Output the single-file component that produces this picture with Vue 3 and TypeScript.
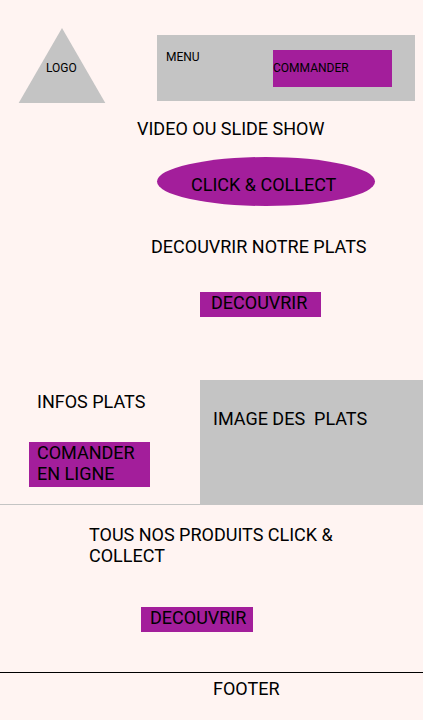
<script setup lang="ts">
interface Labels {
  logo: string
  menu: string
  order: string
  discover: string
}

const labels: Labels = {
  logo: 'LOGO',
  menu: 'MENU',
  order: 'COMMANDER',
  discover: 'DECOUVRIR',
}
</script>

<template>
  <div class="page">
    <header class="header">
      <div class="logo">
        <svg class="logo-shape" width="86" height="75" viewBox="0 0 86 75" aria-hidden="true">
          <path d="M43 0L86.3 75H-0.3Z" fill="#c4c4c4" />
        </svg>
        <span class="logo-text">{{ labels.logo }}</span>
      </div>
      <nav class="nav">
        <a class="menu">{{ labels.menu }}</a>
        <a class="order">{{ labels.order }}</a>
      </nav>
    </header>

    <main>
      <section class="hero">
        <h1 class="hero-title">VIDEO OU SLIDE SHOW</h1>
        <a class="oval">CLICK &amp; COLLECT</a>
      </section>

      <section class="dishes">
        <h2 class="dishes-title">DECOUVRIR NOTRE PLATS</h2>
        <a class="button dishes-button">{{ labels.discover }}</a>
      </section>

      <section class="details">
        <div class="info">
          <h2>INFOS PLATS</h2>
          <a class="button info-button">COMANDER<br />EN LIGNE</a>
        </div>
        <div class="image">IMAGE DES&nbsp; PLATS</div>
      </section>

      <section class="products">
        <h2 class="products-title">TOUS NOS PRODUITS CLICK &amp; COLLECT</h2>
        <a class="button products-button">{{ labels.discover }}</a>
      </section>
    </main>

    <footer class="footer">FOOTER</footer>
  </div>
</template>

<style>
body {
  margin: 0;
  background: #fff4f2;
}
</style>

<style scoped>
.page {
  box-sizing: border-box;
  width: 423px;
  height: 720px;
  overflow: hidden;
  background: #fff4f2;
  color: #000;
  font-family: Roboto, sans-serif;
  font-size: 18px;
  line-height: 21px;
}

h1,
h2 {
  margin: 0;
  font-size: inherit;
  font-weight: 400;
}

.header {
  display: flex;
  align-items: flex-start;
  justify-content: space-between;
  box-sizing: border-box;
  height: 118px;
  padding: 28px 8px 0 19px;
  font-size: 12px;
  line-height: 14px;
}

.logo {
  display: grid;
  width: 86px;
  height: 75px;
}

.logo-shape,
.logo-text {
  grid-area: 1 / 1;
}

.logo-shape {
  display: block;
  overflow: visible;
}

.logo-text {
  padding: 33px 0 0 27px;
}

.nav {
  display: flex;
  align-items: flex-start;
  justify-content: space-between;
  box-sizing: border-box;
  width: 258px;
  height: 66px;
  margin-top: 7px;
  padding: 15px 23px 0 9px;
  background: #c4c4c4;
}

.order {
  box-sizing: border-box;
  width: 119px;
  height: 37px;
  padding-top: 11px;
  background: #a31e9b;
}

.hero {
  height: 118px;
}

.hero-title {
  padding-left: 137px;
}

.oval {
  display: block;
  box-sizing: border-box;
  width: 218px;
  height: 49px;
  margin: 18px 0 0 157px;
  padding: 17px 0 0 34px;
  border-radius: 50%;
  background: #a31e9b;
}

.dishes {
  height: 144px;
}

.dishes-title {
  padding-left: 151px;
}

.button {
  display: block;
  box-sizing: border-box;
  background: #a31e9b;
}

.dishes-button {
  width: 121px;
  height: 25px;
  margin: 35px 0 0 200px;
  padding-left: 11px;
}

.details {
  display: grid;
  grid-template-columns: 200px 1fr;
  height: 124px;
  border-bottom: 1px solid #c4c4c4;
}

.info {
  padding: 11px 0 0 29px;
}

.info h2 {
  padding-left: 8px;
}

.info-button {
  width: 121px;
  height: 45px;
  margin-top: 30px;
  padding-left: 8px;
}

.image {
  padding: 28px 0 0 13px;
  background: #c4c4c4;
}

.products {
  box-sizing: border-box;
  height: 167px;
  padding-top: 19px;
}

.products-title {
  width: 260px;
  padding-left: 89px;
}

.products-button {
  width: 112px;
  height: 25px;
  margin: 41px 0 0 141px;
  padding-left: 9px;
}

.footer {
  padding: 5px 0 0 213px;
  border-top: 1px solid #000;
}
</style>
